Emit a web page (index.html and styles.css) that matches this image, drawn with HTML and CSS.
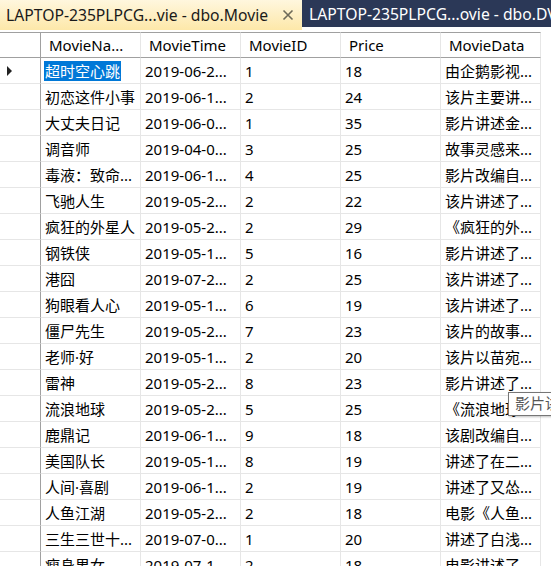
FILE: index.html
```html
<!DOCTYPE html>
<html lang="zh-CN">
<head>
<meta charset="utf-8">
<title>dbo.Movie</title>
<link rel="stylesheet" href="styles.css">
</head>
<body>
<div class="tabs">
  <div class="tab active">
    <span class="tab-title">LAPTOP-235PLPCG...vie - dbo.Movie</span>
    <svg class="close" width="12" height="12" viewBox="0 0 12 12"><path d="M1.5 1.5 L10.5 10.5 M10.5 1.5 L1.5 10.5" stroke="#6e6a58" stroke-width="1.6" fill="none"/></svg>
  </div>
  <div class="tab-well">
    <span class="tab inactive">LAPTOP-235PLPCG...ovie - dbo.DVD</span>
  </div>
</div>
<div class="grid">
  <div class="hc rh"></div>
  <div class="hc">MovieNa...</div>
  <div class="hc">MovieTime</div>
  <div class="hc">MovieID</div>
  <div class="hc">Price</div>
  <div class="hc">MovieData</div>

  <div class="c rh"><svg width="6" height="10" viewBox="0 0 6 10"><path d="M0 0 L5 5 L0 10 Z" fill="#222"/></svg></div>
  <div class="c"><span class="sel">超时空心跳</span></div><div class="c">2019-06-2...</div><div class="c">1</div><div class="c">18</div><div class="c">由企鹅影视...</div>

  <div class="c rh"></div><div class="c">初恋这件小事</div><div class="c">2019-06-1...</div><div class="c">2</div><div class="c">24</div><div class="c">该片主要讲...</div>
  <div class="c rh"></div><div class="c">大丈夫日记</div><div class="c">2019-06-0...</div><div class="c">1</div><div class="c">35</div><div class="c">影片讲述金...</div>
  <div class="c rh"></div><div class="c">调音师</div><div class="c">2019-04-0...</div><div class="c">3</div><div class="c">25</div><div class="c">故事灵感来...</div>
  <div class="c rh"></div><div class="c">毒液：致命...</div><div class="c">2019-06-1...</div><div class="c">4</div><div class="c">25</div><div class="c">影片改编自...</div>
  <div class="c rh"></div><div class="c">飞驰人生</div><div class="c">2019-05-2...</div><div class="c">2</div><div class="c">22</div><div class="c">该片讲述了...</div>
  <div class="c rh"></div><div class="c">疯狂的外星人</div><div class="c">2019-05-2...</div><div class="c">2</div><div class="c">29</div><div class="c">《疯狂的外...</div>
  <div class="c rh"></div><div class="c">钢铁侠</div><div class="c">2019-05-1...</div><div class="c">5</div><div class="c">16</div><div class="c">影片讲述了...</div>
  <div class="c rh"></div><div class="c">港囧</div><div class="c">2019-07-2...</div><div class="c">2</div><div class="c">25</div><div class="c">该片讲述了...</div>
  <div class="c rh"></div><div class="c">狗眼看人心</div><div class="c">2019-05-1...</div><div class="c">6</div><div class="c">19</div><div class="c">该片讲述了...</div>
  <div class="c rh"></div><div class="c">僵尸先生</div><div class="c">2019-05-2...</div><div class="c">7</div><div class="c">23</div><div class="c">该片的故事...</div>
  <div class="c rh"></div><div class="c">老师·好</div><div class="c">2019-05-1...</div><div class="c">2</div><div class="c">20</div><div class="c">该片以苗宛...</div>
  <div class="c rh"></div><div class="c">雷神</div><div class="c">2019-05-2...</div><div class="c">8</div><div class="c">23</div><div class="c">影片讲述了...</div>
  <div class="c rh"></div><div class="c">流浪地球</div><div class="c">2019-05-2...</div><div class="c">5</div><div class="c">25</div><div class="c">《流浪地球...</div>
  <div class="c rh"></div><div class="c">鹿鼎记</div><div class="c">2019-06-1...</div><div class="c">9</div><div class="c">18</div><div class="c">该剧改编自...</div>
  <div class="c rh"></div><div class="c">美国队长</div><div class="c">2019-05-1...</div><div class="c">8</div><div class="c">19</div><div class="c">讲述了在二...</div>
  <div class="c rh"></div><div class="c">人间·喜剧</div><div class="c">2019-06-1...</div><div class="c">2</div><div class="c">19</div><div class="c">讲述了又怂...</div>
  <div class="c rh"></div><div class="c">人鱼江湖</div><div class="c">2019-05-2...</div><div class="c">2</div><div class="c">18</div><div class="c">电影《人鱼...</div>
  <div class="c rh"></div><div class="c">三生三世十...</div><div class="c">2019-07-0...</div><div class="c">1</div><div class="c">20</div><div class="c">讲述了白浅...</div>
  <div class="c rh"></div><div class="c">瘦身男女</div><div class="c">2019-07-1...</div><div class="c">2</div><div class="c">18</div><div class="c">电影讲述了...</div>
</div>
<div class="tooltip">影片讲述了太阳即将毁灭</div>
</body>
</html>
```
FILE: styles.css
```css
html, body {
  margin: 0;
  padding: 0;
  background: #fff;
  overflow: hidden;
  width: 551px;
  height: 566px;
}
body {
  font-family: "Noto Sans", "Noto Sans CJK SC", sans-serif;
  font-size: 15px;
  color: #000;
  position: relative;
}
.tabs {
  display: flex;
  align-items: flex-start;
  height: 32px;
  font-size: 15.7px;
}
.tab {
  white-space: nowrap;
}
.tab.active {
  width: 302px;
  height: 30px;
  box-sizing: border-box;
  padding: 0 6px;
  display: flex;
  align-items: center;
  justify-content: space-between;
  background: linear-gradient(#fff7de, #fde8a9);
  color: #1a1a1a;
}
.tab-title {
  line-height: 30px;
}
.close {
  margin-right: 2px;
}
.tab-well {
  flex: 1;
  height: 27px;
  background: #2b3857;
  overflow: hidden;
  padding-left: 7px;
  box-sizing: border-box;
}
.tab.inactive {
  color: #fff;
  line-height: 28px;
}
.grid {
  display: grid;
  grid-template-columns: 41px repeat(5, 100px);
  grid-auto-rows: 26px;
  width: 541px;
}
.hc, .c {
  box-sizing: border-box;
  border-right: 1px solid #e6e6e6;
  border-bottom: 1px solid #e6e6e6;
  white-space: nowrap;
  overflow: hidden;
  display: flex;
  align-items: center;
  line-height: 20px;
}
.hc {
  border-top: 1px solid #a0a0a0;
  border-bottom: 1px solid #a0a0a0;
  padding-left: 8px;
}
.c {
  padding-left: 4px;
}
.rh {
  border-right: 1px solid #a0a0a0;
  padding-left: 7px;
}
.sel {
  background: #0078d7;
  color: #fff;
  padding: 0 1px;
  margin-left: -1px;
}
.tooltip {
  position: absolute;
  left: 508px;
  top: 392px;
  height: 24px;
  box-sizing: border-box;
  border: 1px solid #767676;
  background: #fff;
  color: #575757;
  padding: 0 6px;
  line-height: 21px;
  white-space: nowrap;
  box-shadow: 1px 1px 2px rgba(0,0,0,0.25);
}
```
